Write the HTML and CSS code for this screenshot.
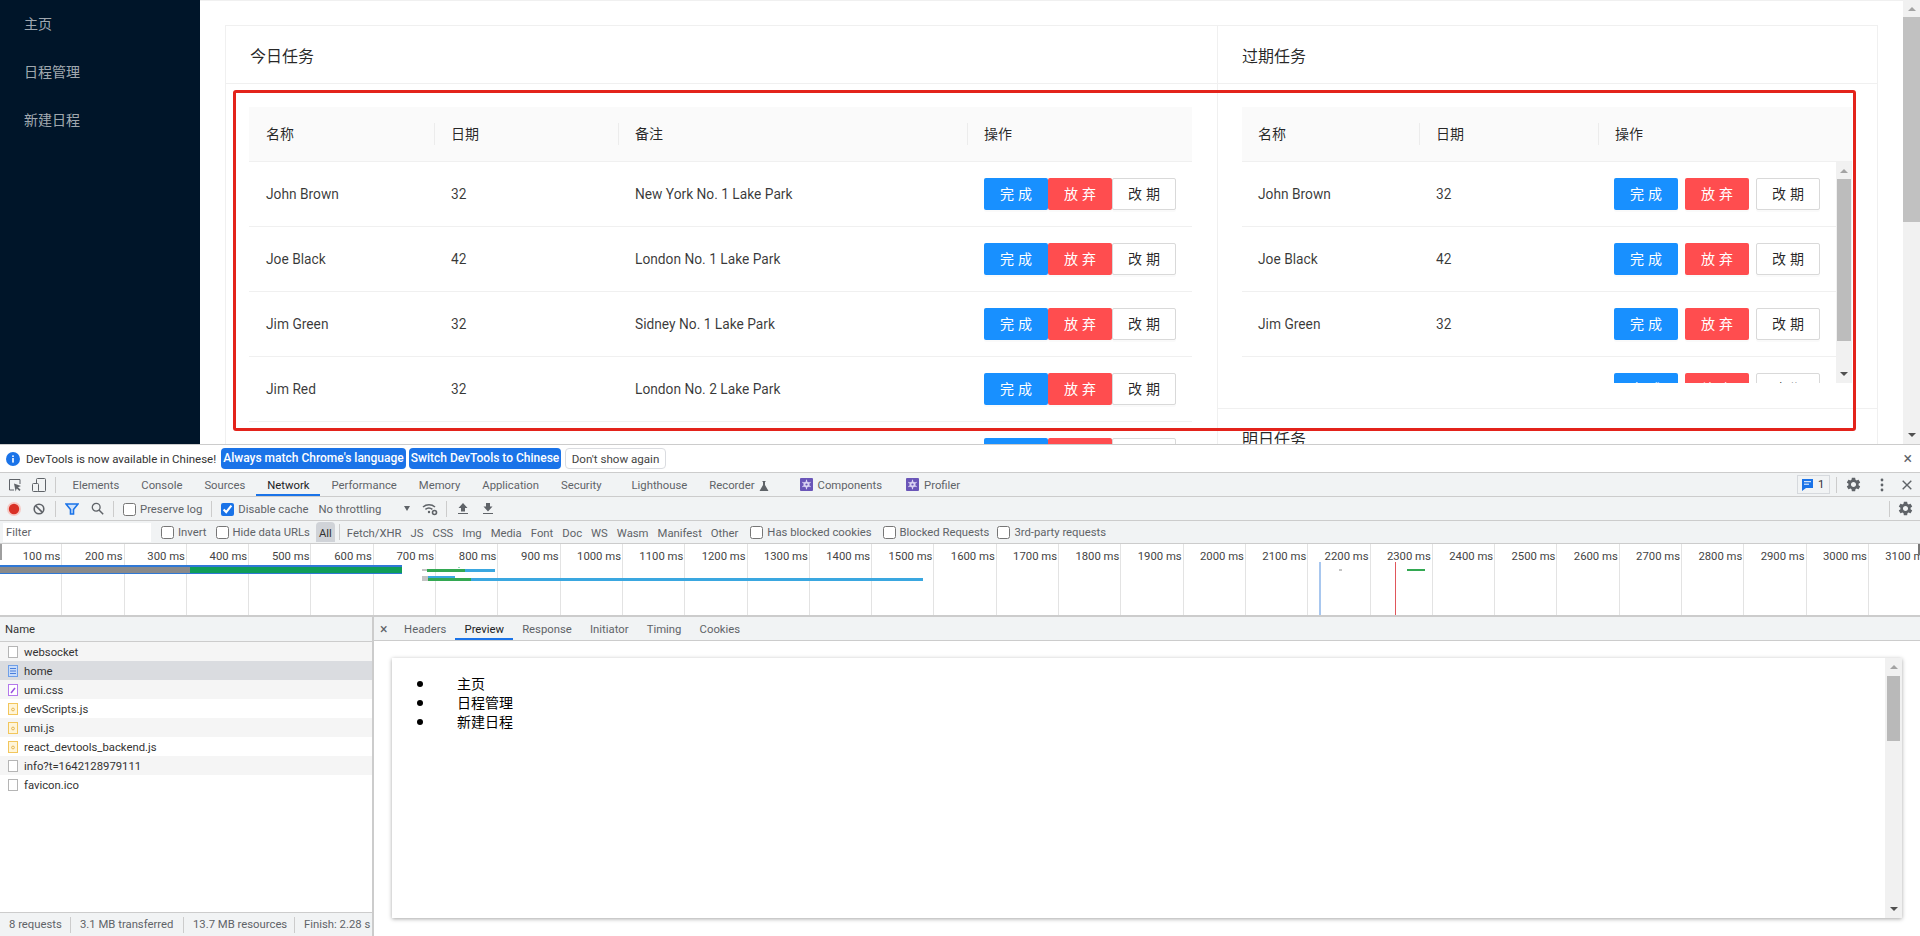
FILE: index.html
```html
<!DOCTYPE html>
<html>
<head>
  <meta charset="UTF-8">
  <title>home</title>
  <link rel="stylesheet" href="styles.css">
</head>
<body>
  <svg class="defs">
    <symbol id="gear" viewBox="0 0 24 24"><path d="M19.14 12.94c.04-.3.06-.61.06-.94 0-.32-.02-.64-.07-.94l2.03-1.58c.18-.14.23-.41.12-.61l-1.92-3.32c-.12-.22-.37-.29-.59-.22l-2.39.96c-.5-.38-1.03-.7-1.62-.94l-.36-2.54c-.04-.24-.24-.41-.48-.41h-3.84c-.24 0-.43.17-.47.41l-.36 2.54c-.59.24-1.13.57-1.62.94l-2.39-.96c-.22-.08-.47 0-.59.22L2.74 8.87c-.12.21-.08.47.12.61l2.03 1.58c-.05.3-.09.63-.09.94s.02.64.07.94l-2.03 1.58c-.18.14-.23.41-.12.61l1.92 3.32c.12.22.37.29.59.22l2.39-.96c.5.38 1.03.7 1.62.94l.36 2.54c.05.24.24.41.48.41h3.84c.24 0 .44-.17.47-.41l.36-2.54c.59-.24 1.13-.56 1.62-.94l2.39.96c.22.08.47 0 .59-.22l1.92-3.32c.12-.22.07-.47-.12-.61l-2.01-1.58zM12 15.6c-1.98 0-3.6-1.62-3.6-3.6s1.62-3.6 3.6-3.6 3.6 1.62 3.6 3.6-1.62 3.6-3.6 3.6z" fill="#5f6368"/></symbol>
    <symbol id="react" viewBox="0 0 14 14"><rect width="14" height="14" rx="1" fill="#6a55b8"/><circle cx="7" cy="7" r="3.2" fill="#d9d2f2"/><path d="M7 2v10M2.6 4.5l8.8 5M2.6 9.5l8.8-5" stroke="#d9d2f2" stroke-width="1.2"/><circle cx="7" cy="7" r="1.2" fill="#6a55b8"/></symbol>
    <symbol id="f-doc" viewBox="0 0 12 14"><rect x="1.5" y="1.5" width="9" height="11" fill="#fff" stroke="#b5b5b5"/></symbol>
    <symbol id="f-html" viewBox="0 0 12 14"><rect x="1.5" y="1.5" width="9" height="11" fill="#c9dcf8" stroke="#6f9fe8"/><path d="M3 4.5h6M3 7h6M3 9.5h6" stroke="#4a7fdc"/></symbol>
    <symbol id="f-css" viewBox="0 0 12 14"><rect x="1.5" y="1.5" width="9" height="11" fill="#fff" stroke="#b478ec"/><path d="M4 10l4-5" stroke="#9a4fe0" stroke-width="1.5"/></symbol>
    <symbol id="f-js" viewBox="0 0 12 14"><rect x="1.5" y="1.5" width="9" height="11" fill="#fff5d8" stroke="#f2c65c"/><circle cx="6" cy="7.5" r="1.4" fill="none" stroke="#e0a93a" stroke-width=".8"/></symbol>
  </svg>

  <div class="page">
    <div class="side">
      <div class="side-item">主页</div>
      <div class="side-item">日程管理</div>
      <div class="side-item">新建日程</div>
    </div>

    <div class="main">
      <div class="board">
        <div class="card">
          <div class="card-head">今日任务</div>
          <div class="card-body">
            <table class="tasks today">
              <thead>
                <tr><th class="c-name">名称</th><th class="c-date">日期</th><th class="c-note">备注</th><th>操作</th></tr>
              </thead>
              <tbody>
                <tr>
                  <td>John Brown</td><td>32</td><td>New York No. 1 Lake Park</td>
                  <td><div class="btns"><span class="btn primary">完成</span><span class="btn danger">放弃</span><span class="btn plain">改期</span></div></td>
                </tr>
                <tr>
                  <td>Joe Black</td><td>42</td><td>London No. 1 Lake Park</td>
                  <td><div class="btns"><span class="btn primary">完成</span><span class="btn danger">放弃</span><span class="btn plain">改期</span></div></td>
                </tr>
                <tr>
                  <td>Jim Green</td><td>32</td><td>Sidney No. 1 Lake Park</td>
                  <td><div class="btns"><span class="btn primary">完成</span><span class="btn danger">放弃</span><span class="btn plain">改期</span></div></td>
                </tr>
                <tr>
                  <td>Jim Red</td><td>32</td><td>London No. 2 Lake Park</td>
                  <td><div class="btns"><span class="btn primary">完成</span><span class="btn danger">放弃</span><span class="btn plain">改期</span></div></td>
                </tr>
                <tr>
                  <td></td><td></td><td></td>
                  <td><div class="btns"><span class="btn primary"></span><span class="btn danger"></span><span class="btn plain"></span></div></td>
                </tr>
              </tbody>
            </table>
          </div>
        </div>

        <div class="side-cards">
          <div class="card side-card">
            <div class="card-head">过期任务</div>
            <div class="card-body">
              <table class="tasks late">
                <thead>
                  <tr><th class="c-name2">名称</th><th class="c-date2">日期</th><th>操作</th></tr>
                </thead>
              </table>
              <div class="late-scroll">
                <div class="late-rows">
                  <table class="tasks late">
                    <tbody>
                      <tr>
                        <td class="c-name2">John Brown</td><td class="c-date2">32</td>
                        <td><div class="btns apart"><span class="btn primary">完成</span><span class="btn danger">放弃</span><span class="btn plain">改期</span></div></td>
                      </tr>
                      <tr>
                        <td>Joe Black</td><td>42</td>
                        <td><div class="btns apart"><span class="btn primary">完成</span><span class="btn danger">放弃</span><span class="btn plain">改期</span></div></td>
                      </tr>
                      <tr>
                        <td>Jim Green</td><td>32</td>
                        <td><div class="btns apart"><span class="btn primary">完成</span><span class="btn danger">放弃</span><span class="btn plain">改期</span></div></td>
                      </tr>
                      <tr>
                        <td></td><td></td>
                        <td><div class="btns apart"><span class="btn primary">完成</span><span class="btn danger">放弃</span><span class="btn plain">改期</span></div></td>
                      </tr>
                    </tbody>
                  </table>
                </div>
                <div class="sbar sbar-table">
                  <div class="arrow up"></div>
                  <div class="thumb"></div>
                  <div class="sbar-fill"></div>
                  <div class="arrow down"></div>
                </div>
              </div>
            </div>
          </div>
          <div class="card side-card">
            <div class="card-head">明日任务</div>
          </div>
        </div>
      </div>
    </div>

    <div class="sbar sbar-page">
      <div class="arrow up"></div>
      <div class="thumb"></div>
      <div class="sbar-fill"></div>
      <div class="arrow down"></div>
    </div>

    <div class="mark"></div>
  </div>

  <div class="devtools">
    <div class="infobar">
      <svg class="info-icon" width="14" height="14" viewBox="0 0 14 14"><circle cx="7" cy="7" r="7" fill="#1a73e8"/><rect x="6.2" y="6" width="1.6" height="4.6" fill="#fff"/><rect x="6.2" y="3.4" width="1.6" height="1.6" fill="#fff"/></svg>
      <span class="info-text">DevTools is now available in Chinese!</span>
      <span class="info-btn blue first">Always match Chrome's language</span>
      <span class="info-btn blue second">Switch DevTools to Chinese</span>
      <span class="info-btn light">Don't show again</span>
      <span class="info-close">×</span>
    </div>

    <div class="tabbar">
      <svg class="ico inspect" width="16" height="16" viewBox="0 0 16 16"><path d="M7 13H2.5V2.5H13V7" fill="none" stroke="#5f6368"/><path d="M7 6.5l7 2.6-3 1.1 2.6 2.6-1.2 1.2-2.6-2.6-1.2 3z" fill="#5f6368"/></svg>
      <svg class="ico device" width="16" height="16" viewBox="0 0 16 16"><rect x="5.5" y="1.5" width="9" height="13" rx="1" fill="none" stroke="#5f6368"/><rect x="1.5" y="6.5" width="6" height="8" rx="1" fill="#f1f3f4" stroke="#5f6368"/></svg>
      <span class="vsep tab-sep"></span>
      <span class="tab">Elements</span>
      <span class="tab">Console</span>
      <span class="tab">Sources</span>
      <span class="tab active">Network</span>
      <span class="tab">Performance</span>
      <span class="tab">Memory</span>
      <span class="tab">Application</span>
      <span class="tab">Security</span>
      <span class="tab tab-lh">Lighthouse</span>
      <span class="tab">Recorder
        <svg class="flask" width="10" height="10" viewBox="0 0 10 10"><path d="M3.5 0h3v1h-.5v3l3.5 6H.5L4 4V1h-.5z" fill="#5f6368"/></svg>
      </span>
      <span class="tab ext first-ext"><svg width="13" height="13"><use href="#react"/></svg>Components</span>
      <span class="tab ext second-ext"><svg width="13" height="13"><use href="#react"/></svg>Profiler</span>
      <span class="tab-end">
        <span class="badge">
          <svg width="13" height="14" viewBox="0 0 13 14"><path d="M1 1h11v9H5l-4 3z" fill="#1a73e8"/><path d="M3 3.7h7M3 6.2h5" stroke="#fff"/></svg>1
        </span>
        <span class="vsep"></span>
        <svg class="end-gear" width="17" height="17"><use href="#gear"/></svg>
        <svg class="end-dots" width="4" height="14" viewBox="0 0 4 14"><circle cx="2" cy="2" r="1.4" fill="#5f6368"/><circle cx="2" cy="7" r="1.4" fill="#5f6368"/><circle cx="2" cy="12" r="1.4" fill="#5f6368"/></svg>
        <svg class="end-x" width="10" height="10" viewBox="0 0 10 10"><path d="M.7.7l8.6 8.6M9.3.7L.7 9.3" stroke="#5f6368" stroke-width="1.4"/></svg>
      </span>
    </div>

    <div class="toolbar">
      <svg class="t-rec" width="14" height="14" viewBox="0 0 14 14"><circle cx="7" cy="7" r="7" fill="#f6c9c4"/><circle cx="7" cy="7" r="5.2" fill="#d93025"/></svg>
      <svg class="t-clear" width="12" height="12" viewBox="0 0 12 12"><circle cx="6" cy="6" r="4.8" fill="none" stroke="#5f6368" stroke-width="1.6"/><path d="M2.6 2.6l6.8 6.8" stroke="#5f6368" stroke-width="1.6"/></svg>
      <span class="vsep t-sep1"></span>
      <svg class="t-filter" width="14" height="12" viewBox="0 0 14 12"><path d="M1 1h12L8.5 6.5V11h-3V6.5z" fill="#cfe2fb" stroke="#1a73e8" stroke-width="1.6"/></svg>
      <svg class="t-search" width="13" height="13" viewBox="0 0 13 13"><circle cx="5.2" cy="5.2" r="3.9" fill="none" stroke="#5f6368" stroke-width="1.3"/><path d="M8 8l4.2 4.2" stroke="#5f6368" stroke-width="1.5"/></svg>
      <span class="vsep t-sep2"></span>
      <label class="chk t-preserve"><input type="checkbox">Preserve log</label>
      <span class="vsep t-sep3"></span>
      <label class="chk t-cache"><input type="checkbox" checked>Disable cache</label>
      <span class="t-throttle">No throttling</span>
      <span class="t-caret"></span>
      <svg class="t-wifi" width="16" height="14" viewBox="0 0 16 14"><path d="M1 5a9 9 0 0 1 12 0M3.4 7.4a5.5 5.5 0 0 1 7 0" fill="none" stroke="#5f6368" stroke-width="1.5"/><circle cx="7" cy="10" r="1.2" fill="#5f6368"/><circle cx="12.5" cy="10.5" r="2" fill="none" stroke="#5f6368" stroke-width="1.6"/></svg>
      <span class="vsep t-sep4"></span>
      <svg class="t-up" width="10" height="13" viewBox="0 0 10 13"><path d="M5 1L.5 6H3v3.5h4V6h2.5z" fill="#5f6368"/><path d="M0 11.5h10" stroke="#5f6368"/></svg>
      <svg class="t-down" width="10" height="13" viewBox="0 0 10 13"><path d="M5 9.5L.5 4.5H3V1h4v3.5h2.5z" fill="#5f6368"/><path d="M0 11.5h10" stroke="#5f6368"/></svg>
      <span class="tool-end">
        <span class="vsep"></span>
        <svg width="17" height="17"><use href="#gear"/></svg>
      </span>
    </div>

    <div class="filterbar">
      <div class="filter-input">Filter</div>
      <label class="chk f-invert"><input type="checkbox">Invert</label>
      <label class="chk f-hide"><input type="checkbox">Hide data URLs</label>
      <span class="chip all">All</span>
      <span class="vsep f-sep"></span>
      <span class="chip">Fetch/XHR</span>
      <span class="chip">JS</span>
      <span class="chip">CSS</span>
      <span class="chip">Img</span>
      <span class="chip">Media</span>
      <span class="chip">Font</span>
      <span class="chip">Doc</span>
      <span class="chip">WS</span>
      <span class="chip">Wasm</span>
      <span class="chip">Manifest</span>
      <span class="chip">Other</span>
      <label class="chk f-cookies"><input type="checkbox">Has blocked cookies</label>
      <label class="chk f-blocked"><input type="checkbox">Blocked Requests</label>
      <label class="chk f-third"><input type="checkbox">3rd-party requests</label>
    </div>

    <div class="overview">
      <div class="tick">100 ms</div><div class="tick">200 ms</div><div class="tick">300 ms</div><div class="tick">400 ms</div>
      <div class="tick">500 ms</div><div class="tick">600 ms</div><div class="tick">700 ms</div><div class="tick">800 ms</div>
      <div class="tick">900 ms</div><div class="tick">1000 ms</div><div class="tick">1100 ms</div><div class="tick">1200 ms</div>
      <div class="tick">1300 ms</div><div class="tick">1400 ms</div><div class="tick">1500 ms</div><div class="tick">1600 ms</div>
      <div class="tick">1700 ms</div><div class="tick">1800 ms</div><div class="tick">1900 ms</div><div class="tick">2000 ms</div>
      <div class="tick">2100 ms</div><div class="tick">2200 ms</div><div class="tick">2300 ms</div><div class="tick">2400 ms</div>
      <div class="tick">2500 ms</div><div class="tick">2600 ms</div><div class="tick">2700 ms</div><div class="tick">2800 ms</div>
      <div class="tick">2900 ms</div><div class="tick">3000 ms</div><div class="tick">3100 ms</div>

      <div class="seg edge-l"></div>
      <div class="seg edge-r"></div>
      <div class="seg home-bar"></div>
      <div class="seg home-wait"></div>
      <div class="seg home-recv"></div>
      <div class="seg a-wait"></div>
      <div class="seg a-green"></div>
      <div class="seg a-blue"></div>
      <div class="seg a-dot"></div>
      <div class="seg b-wait"></div>
      <div class="seg b-blue"></div>
      <div class="seg c-wait"></div>
      <div class="seg c-green"></div>
      <div class="seg c-blue"></div>
      <div class="seg d-dot"></div>
      <div class="seg d-green"></div>
      <div class="seg dom-line"></div>
      <div class="seg load-line"></div>
    </div>

    <div class="panel">
      <div class="reqs">
        <div class="reqs-head">Name</div>
        <div class="reqs-list">
          <div class="req odd"><svg width="12" height="14"><use href="#f-doc"/></svg>websocket</div>
          <div class="req sel"><svg width="12" height="14"><use href="#f-html"/></svg>home</div>
          <div class="req odd"><svg width="12" height="14"><use href="#f-css"/></svg>umi.css</div>
          <div class="req"><svg width="12" height="14"><use href="#f-js"/></svg>devScripts.js</div>
          <div class="req odd"><svg width="12" height="14"><use href="#f-js"/></svg>umi.js</div>
          <div class="req"><svg width="12" height="14"><use href="#f-js"/></svg>react_devtools_backend.js</div>
          <div class="req odd"><svg width="12" height="14"><use href="#f-doc"/></svg>info?t=1642128979111</div>
          <div class="req"><svg width="12" height="14"><use href="#f-doc"/></svg>favicon.ico</div>
        </div>
        <div class="reqs-foot">
          <span class="foot-cell f1">8 requests</span>
          <span class="foot-cell f2">3.1 MB transferred</span>
          <span class="foot-cell f3">13.7 MB resources</span>
          <span class="foot-cell f4">Finish: 2.28 s</span>
        </div>
      </div>

      <div class="detail">
        <div class="detail-tabs">
          <span class="detail-x">×</span>
          <span class="dtab">Headers</span>
          <span class="dtab active">Preview</span>
          <span class="dtab">Response</span>
          <span class="dtab">Initiator</span>
          <span class="dtab">Timing</span>
          <span class="dtab">Cookies</span>
        </div>
        <div class="detail-body">
          <div class="preview">
            <ul class="preview-list">
              <li>主页</li>
              <li>日程管理</li>
              <li>新建日程</li>
            </ul>
            <div class="sbar sbar-preview">
              <div class="arrow up"></div>
              <div class="thumb"></div>
              <div class="sbar-fill"></div>
              <div class="arrow down"></div>
            </div>
          </div>
        </div>
      </div>
    </div>
  </div>
</body>
</html>
```

FILE: styles.css
```css
/* page under test */
body {
  margin: 0;
  height: 936px;
  overflow: hidden;
  background: #fff;
  font-family: Roboto, "Noto Sans CJK SC", sans-serif;
  font-size: 14px;
  color: rgba(0, 0, 0, 0.85);
}

.defs {
  display: none;
}

.page {
  position: relative;
  display: flex;
  height: 444px;
  overflow: hidden;
}

.side {
  flex: 0 0 200px;
  background: #001529;
}

.side-item {
  height: 48px;
  line-height: 48px;
  padding-left: 24px;
  color: rgba(255, 255, 255, 0.65);
}

.main {
  flex: 1;
  min-width: 0;
  padding: 24px 0 0 25px;
  border-top: 1px solid #f0f0f0;
}

.board {
  display: flex;
  width: 1653px;
}

.card {
  flex: 0 0 993px;
  box-sizing: border-box;
  border: 1px solid #f0f0f0;
}

.side-cards {
  flex: 0 0 660px;
}

.side-card {
  border-left: none;
}

.side-card + .side-card {
  border-top: none;
}

.card-head {
  box-sizing: border-box;
  height: 58px;
  line-height: 61px;
  padding-left: 24px;
  font-size: 16px;
  border-bottom: 1px solid #f0f0f0;
}

.card-body {
  padding: 23px 25px 24px 23px;
}

.side-card .card-body {
  padding: 23px 25px 25px 24px;
}

.tasks {
  width: 100%;
  table-layout: fixed;
  border-collapse: separate;
  border-spacing: 0;
  font-size: 13.75px;
}

.tasks th {
  box-sizing: border-box;
  height: 55px;
  padding: 0 16px 2px 17px;
  text-align: left;
  font-size: 14px;
  font-weight: 400;
  background: linear-gradient(#ececec, #ececec) left center / 1px 22px no-repeat #fafafa;
  border-bottom: 1px solid #f0f0f0;
}

.tasks th:first-child {
  background-image: none;
}

.tasks td {
  box-sizing: border-box;
  height: 65px;
  padding: 0 16px 0 17px;
  color: rgba(0, 0, 0, 0.78);
  border-bottom: 1px solid #f0f0f0;
}

.late th:first-child,
.late td:first-child,
.late td:last-child {
  padding-left: 16px;
}

.c-name { width: 185px; }
.c-date { width: 184px; }
.c-note { width: 349px; }
.c-name2 { width: 177px; }
.c-date2 { width: 179px; }

.late-scroll {
  display: flex;
  height: 221px;
  overflow: hidden;
}

.late-rows {
  flex: 1;
  min-width: 0;
}

.btns {
  display: flex;
}

.btns.apart {
  gap: 7px;
}

.btn {
  box-sizing: border-box;
  flex: 0 0 64px;
  height: 32px;
  line-height: 30px;
  text-align: center;
  font-size: 14px;
  letter-spacing: 0.28em;
  text-indent: 0.28em;
  color: rgba(0, 0, 0, 0.85);
  border: 1px solid transparent;
  border-radius: 2px;
  box-shadow: 0 2px 0 rgba(0, 0, 0, 0.02);
}

.btn.primary {
  background: #1890ff;
  color: #fff;
}

.btn.danger {
  background: #ff4d4f;
  color: #fff;
}

.btn.plain {
  background: #fff;
  border-color: #d9d9d9;
}

/* red note drawn over the screenshot */
.mark {
  position: absolute;
  left: 233px;
  top: 90px;
  width: 1617px;
  height: 335px;
  border: 3px solid #e3231b;
  border-radius: 3px;
}

/* scrollbars */
.sbar {
  display: flex;
  flex-direction: column;
  flex: 0 0 17px;
  width: 17px;
  background: #f1f1f1;
}

.sbar-fill {
  flex: 1;
}

.arrow {
  flex: 0 0 17px;
  width: 0;
  height: 0;
  box-sizing: border-box;
  margin: 0 auto;
  border-left: 4px solid transparent;
  border-right: 4px solid transparent;
}

.arrow.up {
  flex-basis: 4px;
  margin-top: 7px;
  margin-bottom: 6px;
  border-bottom: 4px solid #a3a3a3;
}

.arrow.down {
  flex-basis: 4px;
  margin-top: 6px;
  margin-bottom: 7px;
  border-top: 4px solid #505050;
}

.thumb {
  background: #c1c1c1;
}

.sbar-page .thumb {
  height: 205px;
}

.sbar-table {
  flex-basis: 16px;
  width: 16px;
}

.sbar-table .thumb {
  height: 162px;
  margin: 0 1px;
  background: #bcbcbc;
}

.sbar-preview .thumb {
  height: 65px;
  margin: 1px 2px 0;
  background: #b9b9b9;
}

/* devtools */
.devtools {
  height: 492px;
  border-top: 1px solid #ccc;
  font-size: 11.3px;
  color: #5f6368;
}

.infobar {
  box-sizing: border-box;
  display: flex;
  align-items: center;
  height: 28px;
  padding-left: 6px;
  border-bottom: 1px solid #ccc;
  background: #fff;
}

.info-text {
  margin-left: 6px;
  width: 189px;
  font-size: 11.5px;
  color: #333;
  white-space: nowrap;
}

.info-btn {
  box-sizing: border-box;
  height: 21px;
  line-height: 20px;
  text-align: center;
  border-radius: 4px;
  white-space: nowrap;
}

.info-btn.blue {
  background: #1a73e8;
  color: #fff;
  font-size: 12px;
  font-weight: 500;
}

.info-btn.first {
  width: 185px;
  margin-left: 6px;
}

.info-btn.second {
  width: 152px;
  margin-left: 3px;
}

.info-btn.light {
  width: 101px;
  margin-left: 4px;
  font-size: 11.6px;
  border: 1px solid #dadce0;
  color: #444;
}

.info-close {
  margin-left: auto;
  margin-right: 8px;
  font-size: 16px;
  color: #5f6368;
}

.tabbar {
  box-sizing: border-box;
  display: flex;
  align-items: center;
  height: 24px;
  border-bottom: 1px solid #ccc;
  background: #f1f3f4;
}

.ico.inspect {
  margin-left: 7px;
}

.ico.device {
  margin-left: 8px;
}

.vsep {
  flex: 0 0 1px;
  width: 1px;
  height: 16px;
  background: #ccc;
}

.tab-sep {
  margin: 0 5.5px 0 8px;
}

.tab {
  display: flex;
  align-items: center;
  box-sizing: border-box;
  height: 23px;
  padding: 2px 11px 0;
  white-space: nowrap;
}

.tab.active {
  color: #202124;
  border-bottom: 2px solid #1a73e8;
  padding-top: 4px;
}

.tab-lh {
  margin-left: 8px;
}

.flask {
  margin-left: 4px;
}

.tab.ext svg {
  margin-right: 5px;
  margin-bottom: 2px;
}

.first-ext {
  margin-left: 9px;
}

.second-ext {
  margin-left: 2px;
}

.tab-end {
  display: flex;
  align-items: center;
  margin-left: auto;
}

.badge {
  box-sizing: border-box;
  display: flex;
  align-items: center;
  gap: 4px;
  width: 33px;
  height: 19px;
  padding-left: 3px;
  border: 1px solid #d6d9dd;
  color: #333;
}

.tab-end .vsep {
  margin: 0 8px 0 6px;
}

.end-gear {
  margin-right: 18px;
}

.end-dots {
  margin-right: 18px;
}

.end-x {
  margin-right: 8px;
}

.toolbar {
  box-sizing: border-box;
  display: flex;
  align-items: center;
  height: 24px;
  border-bottom: 1px solid #ccc;
  background: #f1f3f4;
}

.t-rec { margin-left: 7px; }
.t-clear { margin-left: 12px; }
.t-sep1 { margin-left: 10px; }
.t-filter { margin-left: 9px; }
.t-search { margin-left: 12px; }
.t-sep2 { margin-left: 9px; }
.t-preserve { margin-left: 9px; padding-top: 1px; }
.t-sep3 { margin-left: 9px; }
.t-cache { margin-left: 9px; padding-top: 1px; }
.t-throttle { margin-left: 10px; padding-top: 1px; }

.t-caret {
  margin-left: 23px;
  border-left: 3px solid transparent;
  border-right: 3px solid transparent;
  border-top: 5px solid #5f6368;
}

.t-wifi { margin-left: 12px; }
.t-sep4 { margin-left: 8px; }
.t-up { margin-left: 11px; }
.t-down { margin-left: 15px; }

.tool-end {
  display: flex;
  align-items: center;
  gap: 7px;
  margin-left: auto;
  margin-right: 6px;
}

.chk {
  display: flex;
  align-items: center;
  white-space: nowrap;
}

.chk input {
  width: 13px;
  height: 13px;
  margin: 0 4px 0 0;
  accent-color: #1a73e8;
}

.filterbar {
  box-sizing: border-box;
  display: flex;
  align-items: center;
  height: 23px;
  border-bottom: 1px solid #ccc;
  background: #f1f3f4;
}

.filter-input {
  box-sizing: border-box;
  flex: 0 0 148px;
  height: 19px;
  line-height: 19px;
  margin-left: 3px;
  padding-left: 3px;
  background: #fff;
  color: #5f6368;
}

.f-invert { margin-left: 10px; }
.f-hide { margin-left: 9px; }

.chip {
  margin-left: 9px;
  padding-top: 3px;
  white-space: nowrap;
}

.chip.all {
  box-sizing: border-box;
  width: 19px;
  height: 20px;
  line-height: 19px;
  margin-left: 6px;
  padding-top: 2px;
  text-align: center;
  border-radius: 4px 4px 0 0;
  background: #d0d3d8;
  color: #333;
}

.f-sep {
  margin-left: 4px;
  margin-right: -2px;
}

.f-cookies { margin-left: 12px; }
.f-blocked { margin-left: 11px; }
.f-third { margin-left: 8px; }

.overview {
  position: relative;
  box-sizing: border-box;
  display: flex;
  height: 73px;
  overflow: hidden;
  border-bottom: 2px solid #ccc;
  background: #fff;
}

.tick {
  box-sizing: border-box;
  flex: 0 0 62.3px;
  padding: 5px 1px 0 0;
  line-height: 16px;
  text-align: right;
  white-space: nowrap;
  color: #444;
  border-right: 1px solid #e3e3e3;
}

/* timeline marks sit at their time on the canvas */
.seg {
  position: absolute;
}

.edge-l { left: 0; top: 0; width: 2px; height: 16px; background: #9e9e9e; }
.edge-r { right: 0; top: 0; width: 2px; height: 11px; background: #777; }
.home-bar { left: 0; top: 21px; width: 402px; height: 9px; background: #2f78d6; }
.home-wait { left: 0; top: 23px; width: 190px; height: 6px; background: #8a8a8a; }
.home-recv { left: 190px; top: 23px; width: 212px; height: 6px; background: #0f9d58; }
.a-wait { left: 422px; top: 25px; width: 5px; height: 2px; background: #c4c4c4; }
.a-green { left: 427px; top: 25px; width: 38px; height: 3px; background: #33a852; }
.a-blue { left: 465px; top: 25px; width: 30px; height: 3px; background: #3aa7e0; }
.a-dot { left: 458px; top: 23px; width: 2px; height: 1px; background: #9db; }
.b-wait { left: 422px; top: 32px; width: 6px; height: 2px; background: #c4c4c4; }
.b-blue { left: 428px; top: 32px; width: 27px; height: 2px; background: #3aa7e0; }
.c-wait { left: 422px; top: 34px; width: 6px; height: 3px; background: #c4c4c4; }
.c-green { left: 428px; top: 34px; width: 43px; height: 3px; background: #33a852; }
.c-blue { left: 471px; top: 34px; width: 452px; height: 3px; background: #3aa7e0; }
.d-dot { left: 1339px; top: 25px; width: 3px; height: 2px; background: #c4c4c4; }
.d-green { left: 1407px; top: 25px; width: 18px; height: 2px; background: #33a852; }
.dom-line { left: 1319px; top: 18px; width: 2px; height: 55px; background: #a8c7ef; }
.load-line { left: 1395px; top: 18px; width: 1px; height: 55px; background: #e0565b; }

.panel {
  display: flex;
  height: 319px;
}

.reqs {
  box-sizing: border-box;
  display: flex;
  flex-direction: column;
  flex: 0 0 374px;
  min-width: 0;
  border-right: 2px solid #ccc;
}

.reqs-head {
  box-sizing: border-box;
  height: 25px;
  line-height: 26px;
  padding-left: 5px;
  color: #333;
  background: #f1f3f4;
  border-bottom: 1px solid #ccc;
}

.reqs-list {
  flex: 1;
}

.req {
  box-sizing: border-box;
  display: flex;
  align-items: center;
  gap: 5px;
  height: 19px;
  padding: 1px 0 0 7px;
  color: #333;
}

.req.odd {
  background: #f5f5f5;
}

.req.sel {
  background: #dadce0;
}

.reqs-foot {
  box-sizing: border-box;
  display: flex;
  align-items: center;
  height: 24px;
  overflow: hidden;
  border-top: 1px solid #ccc;
  background: #f1f3f4;
  white-space: nowrap;
}

.foot-cell {
  box-sizing: border-box;
  height: 16px;
  line-height: 16px;
  padding-left: 9px;
  border-right: 1px solid #ccc;
}

.f1 { flex: 0 0 71px; }
.f2 { flex: 0 0 113px; }
.f3 { flex: 0 0 111px; }
.f4 { flex: 1; min-width: 0; border-right: none; }

.detail {
  flex: 1;
  min-width: 0;
}

.detail-tabs {
  box-sizing: border-box;
  display: flex;
  align-items: center;
  height: 24px;
  padding-left: 6px;
  border-bottom: 1px solid #ccc;
  background: #f1f3f4;
}

.detail-x {
  width: 15px;
  font-size: 14px;
}

.dtab {
  box-sizing: border-box;
  height: 23px;
  line-height: 25px;
  padding: 0 9.1px;
}

.dtab.active {
  color: #202124;
  border-bottom: 2px solid #1a73e8;
}

.detail-body {
  padding: 17px 18px 0 18px;
}

.preview {
  display: flex;
  height: 260px;
  width: 1510px;
  background: #fff;
  box-shadow: 0 1px 4px rgba(0, 0, 0, 0.35);
}

.preview-list {
  flex: 1;
  margin: 0;
  padding: 15px 0 0 43px;
  font-size: 14px;
  line-height: 19px;
  color: #000;
}

.preview-list li {
  height: 19px;
  padding-left: 22px;
}

.preview-list li::marker {
  font-size: 18px;
}
```
